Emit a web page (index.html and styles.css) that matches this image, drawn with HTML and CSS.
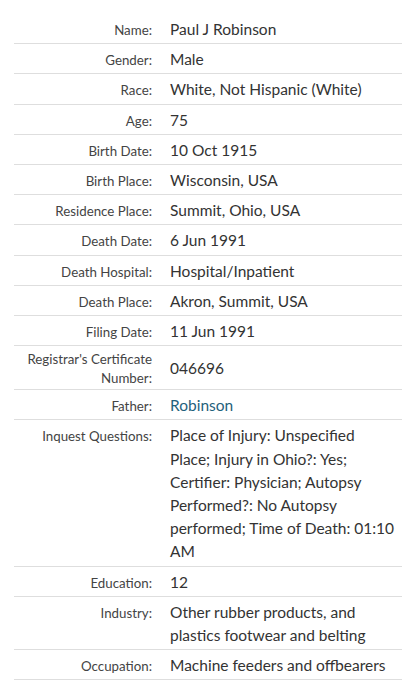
FILE: index.html
```html
<!DOCTYPE html>
<html>
<head>
<meta charset="utf-8">
<link rel="stylesheet" href="styles.css">
</head>
<body>
<div class="record">
  <div class="row"><div class="label">Name:</div><div class="value">Paul J Robinson</div></div>
  <div class="row"><div class="label">Gender:</div><div class="value">Male</div></div>
  <div class="row"><div class="label">Race:</div><div class="value">White, Not Hispanic (White)</div></div>
  <div class="row"><div class="label">Age:</div><div class="value">75</div></div>
  <div class="row"><div class="label">Birth Date:</div><div class="value">10 Oct 1915</div></div>
  <div class="row"><div class="label">Birth Place:</div><div class="value">Wisconsin, USA</div></div>
  <div class="row"><div class="label">Residence Place:</div><div class="value">Summit, Ohio, USA</div></div>
  <div class="row"><div class="label">Death Date:</div><div class="value">6 Jun 1991</div></div>
  <div class="row"><div class="label">Death Hospital:</div><div class="value">Hospital/Inpatient</div></div>
  <div class="row"><div class="label">Death Place:</div><div class="value">Akron, Summit, USA</div></div>
  <div class="row"><div class="label">Filing Date:</div><div class="value">11 Jun 1991</div></div>
  <div class="row row-tall"><div class="label">Registrar's Certificate Number:</div><div class="value">046696</div></div>
  <div class="row"><div class="label">Father:</div><div class="value"><a class="link" href="#">Robinson</a></div></div>
  <div class="row"><div class="label">Inquest Questions:</div><div class="value">Place of Injury: Unspecified Place; Injury in Ohio?: Yes; Certifier: Physician; Autopsy Performed?: No Autopsy performed; Time of Death: 01:10 AM</div></div>
  <div class="row"><div class="label">Education:</div><div class="value">12</div></div>
  <div class="row"><div class="label">Industry:</div><div class="value">Other rubber products, and plastics footwear and belting</div></div>
  <div class="row"><div class="label">Occupation:</div><div class="value">Machine feeders and offbearers</div></div>
</div>
</body>
</html>
```

FILE: styles.css
```css
html, body {
  margin: 0;
  padding: 0;
  background: #fff;
}
body {
  padding: 14px 8px 0 14px;
  font-family: Lato, "Noto Sans", sans-serif;
  color: #333;
}
.record {
  display: flex;
  flex-direction: column;
}
.row {
  display: grid;
  grid-template-columns: 138px 1fr;
  column-gap: 18px;
  align-items: baseline;
  padding: 4px 5px 2px 0;
  border-bottom: 1px solid #dedede;
}
.label {
  text-align: right;
  font-size: 13.3px;
  line-height: 18.5px;
  color: #444;
}
.value {
  font-size: 15.5px;
  line-height: 23.2px;
  color: #333;
}
.row-tall .value {
  align-self: center;
}
.link {
  color: #1f617c;
  text-decoration: none;
}
```
